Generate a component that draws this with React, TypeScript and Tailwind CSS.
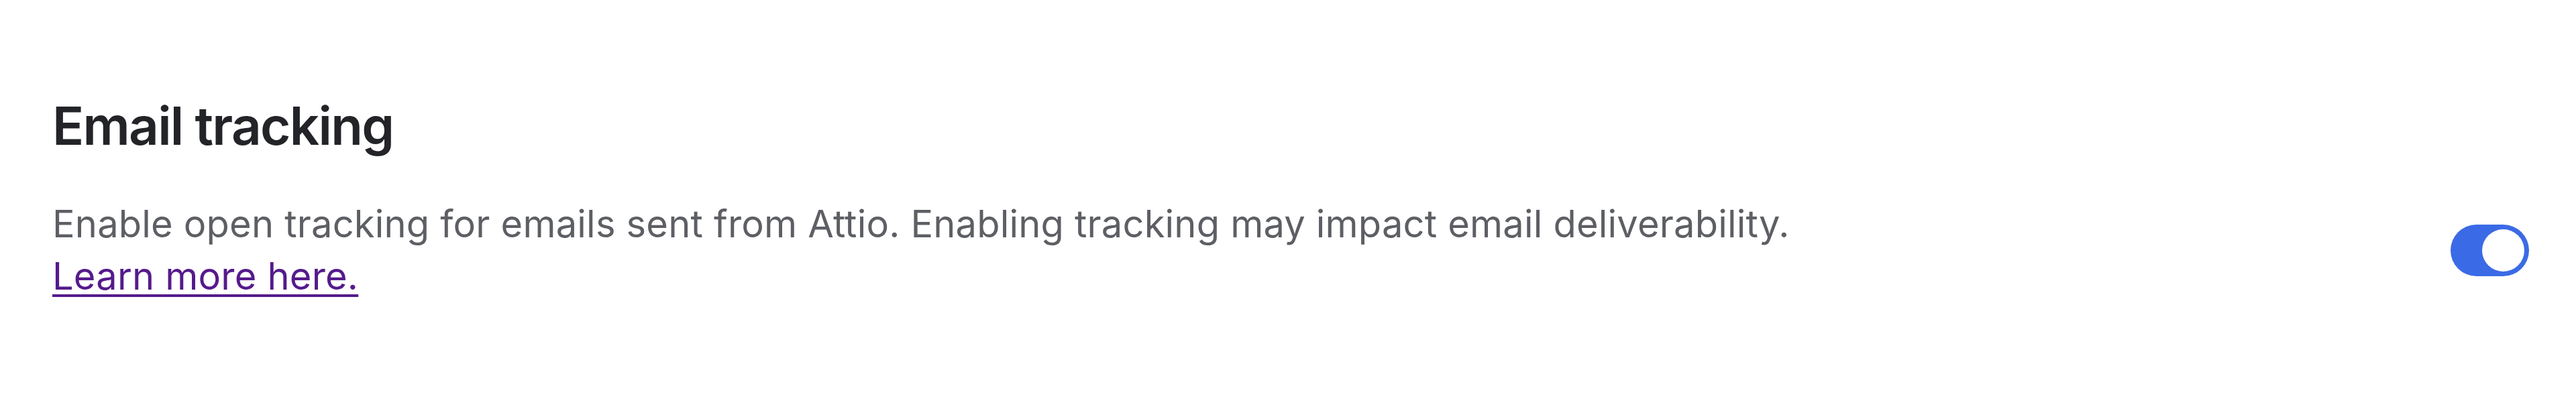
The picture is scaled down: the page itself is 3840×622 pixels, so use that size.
import React from 'react';

const Toggle: React.FC<{ on: boolean }> = ({ on }) => {
  return (
    <button
      type="button"
      role="switch"
      aria-checked={on}
      className={`flex h-[77px] w-[117px] shrink-0 items-center rounded-full p-[7px] ${on ? 'justify-end bg-[#3b6ae6]' : 'justify-start bg-[#d4d5d9]'}`}
    >
      <span className="block h-[63px] w-[63px] rounded-full bg-white" />
    </button>
  );
};

const App: React.FC = () => {
  return (
    <div className="min-h-[622px] w-full bg-white pl-[78px] pr-[70px] pt-[140px] font-['Inter','Liberation_Sans',sans-serif]">
      <h2 className="text-[78px] font-semibold leading-[96px] tracking-[-1.7px] text-[#232428]">Email tracking</h2>

      {/* Description + switch */}
      <div className="mt-[59px] flex items-center justify-between gap-8">
        <p className="text-[56px] leading-[78px] tracking-[0.2px] text-[#5d5f64]">
          Enable open tracking for emails sent from Attio. Enabling tracking may impact email deliverability.
          <br />
          <a href="#" className="text-[#551a8b] underline decoration-[4px] underline-offset-[7px]">
            Learn more here.
          </a>
        </p>
        <Toggle on />
      </div>
    </div>
  );
};

export default App;
